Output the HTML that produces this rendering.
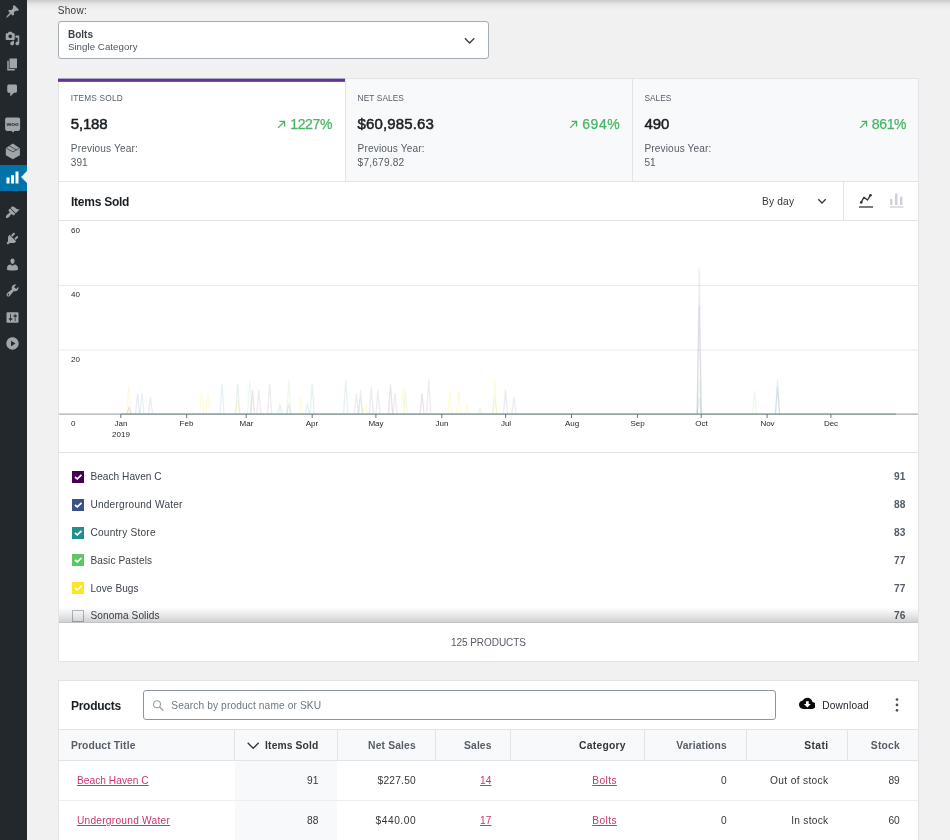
<!DOCTYPE html>
<html lang="en">
<head>
<meta charset="utf-8">
<title>Products Report</title>
<style>
*{box-sizing:border-box;margin:0;padding:0}
html,body{width:950px;height:840px;overflow:hidden}
body{background:#f1f1f1;font-family:"Liberation Sans",sans-serif;color:#23282d;position:relative;font-size:10px}
.abs{position:absolute}
#side{position:absolute;left:0;top:0;width:27px;height:840px;background:#23282d}
#side svg{will-change:transform}
#side .cur{position:absolute;left:0;top:164.700px;width:27px;height:26.300px;background:#0073aa}
#side .cur:after{content:"";position:absolute;right:0;top:6.600px;border:6.500px solid transparent;border-right:6px solid #f1f1f1;border-left:0}
#side svg{position:absolute;left:5.400px;width:15px;height:15px;fill:#a0a5aa}
#topshadow{position:absolute;left:27px;top:0;width:923px;height:10px;background:linear-gradient(#c9c9cb,#e6e6e7 40%,#f1f1f1)}
.t{position:absolute;white-space:nowrap;line-height:1}
#txt{position:absolute;left:0;top:0;width:950px;height:840px;will-change:transform}
.b{font-weight:bold}
.lk{text-decoration:underline;text-underline-offset:1px;text-decoration-thickness:.8px}
.card{position:absolute;background:#fff;border:1px solid #e2e4e7}
.cb{position:absolute;left:13px;width:12px;height:12px}
.cb svg{display:block}
</style>
</head>
<body>
<div id="side">
<div class="cur"></div>
<svg style="top:4px;fill:#a0a5aa" viewBox="0 0 20 20"><path fill-rule="evenodd" d="M10.44 3.02l1.82-1.82 6.36 6.35-1.83 1.82c-1.050-.68-2.480-.57-3.410.36l-.75.75c-.920.930-1.040 2.350-.350 3.410l-1.830 1.820-2.410-2.410-2.800 2.790c-.420.420-3.380 2.710-3.800 2.290s1.860-3.390 2.280-3.810l2.790-2.790L4.100 9.360l1.830-1.820c1.050.690 2.480.570 3.400-.360l.750-.750c.930-.920 1.050-2.350.360-3.410z"/></svg>
<svg style="top:30.5px;fill:#a0a5aa" viewBox="0 0 20 20"><path fill-rule="evenodd" d="M13 11V4c0-.55-.45-1-1-1h-1.670L9 1H5L3.670 3H2c-.55 0-1 .45-1 1v7c0 .55.45 1 1 1h10c.55 0 1-.45 1-1zM7 4.500c1.380 0 2.500 1.120 2.500 2.500S8.380 9.500 7 9.500 4.500 8.380 4.500 7 5.620 4.500 7 4.500zM14 6h5v10.500c0 1.380-1.120 2.500-2.500 2.500S14 17.880 14 16.500s1.120-2.500 2.500-2.500c.17 0 .34.020.5.050V9h-3V6zm-4 8.050V13h2v3.500c0 1.380-1.120 2.500-2.500 2.500S7 17.880 7 16.500 8.120 14 9.500 14c.17 0 .34.020.5.050z"/></svg>
<svg style="top:56.75px;fill:#a0a5aa" viewBox="0 0 20 20"><path fill-rule="evenodd" d="M6 15V2h10v13H6zm-1 1h8v2H3V5h2v11z"/></svg>
<svg style="top:82.85px;fill:#a0a5aa" viewBox="0 0 20 20"><path fill-rule="evenodd" d="M5 2h9c1.100 0 2 .9 2 2v7c0 1.100-.9 2-2 2h-2l-5 5v-5H5c-1.100 0-2-.9-2-2V4c0-1.100.9-2 2-2z"/></svg>
<svg style="top:0;left:0;width:27px;height:165px" viewBox="0 0 27 165"><path d="M6.900 117.400h11.400a1.800 1.800 0 0 1 1.800 1.800v9.900a1.800 1.800 0 0 1-1.800 1.800h-3.900l-1.300 1.900-1.300-1.900h-4.900a1.800 1.800 0 0 1-1.800-1.800v-9.900a1.800 1.800 0 0 1 1.800-1.800z"/><text x="12.700" y="125.600" text-anchor="middle" font-family="Liberation Sans, sans-serif" font-weight="bold" font-size="6.200" style="fill:#23282d">woo</text><path d="M12.800 143.400L19.900 148.300V155.300L12.800 159.300L5.800 155.300V148.300Z"/><path d="M6.500 148.300L12.800 151.800L19.300 148.300M9.300 145.900L16.300 149.800" fill="none" stroke="#23282d" stroke-width=".7"/></svg>
<svg style="top:170.1px;fill:#fff" viewBox="0 0 20 20"><path fill-rule="evenodd" d="M18 18V2h-4v16h4zm-6 0V7H8v11h4zm-6 0v-8H2v8h4z"/></svg>
<svg style="top:204.7px;fill:#a0a5aa" viewBox="0 0 20 20"><path fill-rule="evenodd" d="M14.480 11.060L7.410 3.990l1.500-1.500c.5-.56 2.300-.470 3.510.320 1.210.8 1.430 1.280 2.910 2.100 1.180.64 2.450 1.260 4.450.850zm-.710.710L6.700 4.700 4.930 6.470c-.390.390-.390 1.020 0 1.410l1.060 1.060c.390.390.390 1.030 0 1.420-.6.600-1.430 1.110-2.210 1.690-.350.260-.7.530-1.010.840C1.430 14.230.4 16.080 1.400 17.070c.990 1 2.840-.030 4.180-1.360.310-.310.580-.660.850-1.020.570-.780 1.080-1.610 1.690-2.210.390-.390 1.020-.390 1.410 0l1.060 1.060c.390.390 1.020.390 1.410 0z"/></svg>
<svg style="top:230.9px;fill:#a0a5aa" viewBox="0 0 20 20"><path fill-rule="evenodd" d="M13.110 4.360L9.870 7.600 8 5.730l3.240-3.240c.350-.340 1.050-.2 1.560.320.520.510.660 1.210.310 1.550zm-8 1.770l.910-1.120 9.010 9.010-1.190.840c-.710.710-2.630 1.160-3.820 1.160H6.140L4.900 17.260c-.590.590-1.540.590-2.120 0-.590-.580-.590-1.530 0-2.120L4 13.900V10c0-1.190.4-3.160 1.110-3.870zm7.260 3.970l3.240-3.240c.340-.350 1.040-.210 1.550.310.520.510.660 1.210.310 1.550l-3.240 3.250z"/></svg>
<svg style="top:257.2px;fill:#a0a5aa" viewBox="0 0 20 20"><path fill-rule="evenodd" d="M10 9.250c-2.270 0-2.730-3.440-2.730-3.440C7 4.020 7.820 2 9.970 2c2.160 0 2.980 2.020 2.710 3.810 0 0-.410 3.440-2.680 3.440zm0 2.570L12.720 10c2.390 0 4.520 2.330 4.520 4.530v2.490s-3.650 1.130-7.240 1.130c-3.650 0-7.240-1.130-7.240-1.130v-2.490c0-2.250 1.940-4.480 4.470-4.480z"/></svg>
<svg style="top:283.3px;fill:#a0a5aa" viewBox="0 0 20 20"><path fill-rule="evenodd" d="M16.680 9.770c-1.340 1.340-3.300 1.670-4.950.990l-5.410 6.520c-.990.990-2.590.990-3.580 0s-.99-2.590 0-3.570l6.520-5.420c-.680-1.650-.350-3.610.990-4.950 1.280-1.280 3.120-1.620 4.720-1.060l-2.890 2.890 2.820 2.820 2.860-2.870c.530 1.580.180 3.390-1.080 4.650zM3.810 16.210c.4.390 1.040.390 1.430 0 .4-.4.400-1.040 0-1.430-.390-.4-1.030-.4-1.430 0-.390.390-.390 1.030 0 1.430z"/></svg>
<svg style="top:309.8px;fill:#a0a5aa" viewBox="0 0 20 20"><path fill-rule="evenodd" d="M18 16V4c0-.55-.45-1-1-1H3c-.55 0-1 .45-1 1v12c0 .55.45 1 1 1h14c.55 0 1-.45 1-1zM8 11h1c.55 0 1 .45 1 1s-.45 1-1 1H8v1.500c0 .28-.22.500-.5.500s-.5-.22-.5-.5V13H6c-.55 0-1-.45-1-1s.45-1 1-1h1V5.500c0-.28.220-.5.500-.5s.5.220.5.500V11zm5-2h-1c-.55 0-1-.45-1-1s.45-1 1-1h1V5.500c0-.28.220-.5.500-.5s.5.220.5.500V7h1c.55 0 1 .45 1 1s-.45 1-1 1h-1v5.500c0 .28-.22.500-.5.500s-.5-.22-.5-.5V9z"/></svg>
<svg style="top:336.3px;fill:#a0a5aa" viewBox="0 0 20 20"><path fill-rule="evenodd" d="M10 1.800c-4.530 0-8.200 3.670-8.200 8.200s3.670 8.200 8.200 8.200 8.200-3.670 8.200-8.200S14.530 1.800 10 1.800zM8 13.800V6.200l5.900 3.800z"/></svg>
</div>

<div id="topshadow"></div>
<div class="abs" style="left:58px;top:21px;width:431px;height:38px;background:#fff;border:1px solid #a4adb6;border-radius:3px"></div>
<svg class="abs" style="left:463px;top:35px" width="14" height="11" viewBox="463 35 14 11"><path d="M464.900 38.300L469.600 42.900L474.300 38.300" fill="none" stroke="#3c4043" stroke-width="1.400"/></svg>
<div class="card" style="left:58px;top:78px;width:861px;height:104px;background:#f8f9fa"></div>
<div class="abs" style="left:59px;top:79px;width:286px;height:102px;background:#fff"></div>
<div class="abs" style="left:58px;top:78px;width:287px;height:1px;background:#aea2c7"></div>
<div class="abs" style="left:58px;top:79px;width:287px;height:2px;background:#5f3695"></div>
<div class="abs" style="left:58px;top:81px;width:287px;height:1px;background:#7355a3"></div>
<div class="abs" style="left:345px;top:79px;width:1px;height:102px;background:#e2e4e7"></div>
<div class="abs" style="left:632px;top:79px;width:1px;height:102px;background:#e2e4e7"></div>
<svg class="abs" style="left:276.3px;top:119px" width="10" height="11" viewBox="-1 -2 10 11"><path d="M1.100 6.900L7.300 0.700M2.600 0.400H7.600V5.400" fill="none" stroke="#45b764" stroke-width="1.250"/></svg>
<svg class="abs" style="left:567.8px;top:119px" width="10" height="11" viewBox="-1 -2 10 11"><path d="M1.100 6.900L7.300 0.700M2.600 0.400H7.600V5.400" fill="none" stroke="#45b764" stroke-width="1.250"/></svg>
<svg class="abs" style="left:857.9px;top:119px" width="10" height="11" viewBox="-1 -2 10 11"><path d="M1.100 6.900L7.300 0.700M2.600 0.400H7.600V5.400" fill="none" stroke="#45b764" stroke-width="1.250"/></svg>
<div class="card" style="left:58px;top:181px;width:861px;height:481px"></div>
<div class="abs" style="left:59px;top:220px;width:859px;height:1px;background:#e2e4e7"></div>
<div class="abs" style="left:843px;top:182px;width:1px;height:38px;background:#e2e4e7"></div>
<div class="abs" style="left:59px;top:452px;width:859px;height:1px;background:#e2e4e7"></div>
<svg class="abs" style="left:0;top:0;will-change:transform" width="950" height="460" viewBox="0 0 950 460">
<g fill="none" stroke-width="1.3" stroke-linejoin="round">
<path d="M59 285.5H918M59 350H918" stroke="#e8eaeb" stroke-width="1"/>
<path d="M126.6 414.5L128.7 387L130.8 414.5" stroke="#fde725" stroke-opacity="0.17"/><path d="M126.9 414.5L129.0 407L131.1 414.5" stroke="#440154" stroke-opacity="0.115"/><path d="M135.5 414.5L137.6 394L139.7 414.5" stroke="#3b528b" stroke-opacity="0.115"/><path d="M139.9 414.5L142.0 394L144.1 414.5" stroke="#21908d" stroke-opacity="0.115"/><path d="M148.4 414.5L150.5 397L152.6 414.5" stroke="#7a5195" stroke-opacity="0.115"/><path d="M199.6 414.5L201.7 391.5L203.8 414.5" stroke="#fde725" stroke-opacity="0.17"/><path d="M205.9 414.5L208.0 394L210.1 414.5" stroke="#fde725" stroke-opacity="0.17"/><path d="M219.9 414.5L222.0 384L224.1 414.5" stroke="#21908d" stroke-opacity="0.115"/><path d="M235.6 414.5L237.7 384L239.8 414.5" stroke="#21908d" stroke-opacity="0.115"/><path d="M235.6 414.5L237.7 400L239.8 414.5" stroke="#fde725" stroke-opacity="0.17"/><path d="M247.6 414.5L249.7 381L251.8 414.5" stroke="#5dc863" stroke-opacity="0.115"/><path d="M250.4 414.5L252.5 390.5L254.6 414.5" stroke="#440154" stroke-opacity="0.115"/><path d="M256.7 414.5L258.8 390.5L260.9 414.5" stroke="#7a5195" stroke-opacity="0.115"/><path d="M267.5 414.5L269.6 384L271.7 414.5" stroke="#7a5195" stroke-opacity="0.115"/><path d="M277.9 414.5L280.0 404.7L282.1 414.5" stroke="#21908d" stroke-opacity="0.115"/><path d="M286.7 414.5L288.8 381L290.9 414.5" stroke="#5dc863" stroke-opacity="0.115"/><path d="M286.7 414.5L288.8 404L290.9 414.5" stroke="#3b528b" stroke-opacity="0.115"/><path d="M298.7 414.5L300.8 397L302.9 414.5" stroke="#fde725" stroke-opacity="0.17"/><path d="M305.3 414.5L307.4 404L309.5 414.5" stroke="#21908d" stroke-opacity="0.115"/><path d="M310.1 414.5L312.2 384L314.3 414.5" stroke="#21908d" stroke-opacity="0.115"/><path d="M343.6 414.5L345.7 381L347.8 414.5" stroke="#21908d" stroke-opacity="0.115"/><path d="M354.3 414.5L356.4 393.7L358.5 414.5" stroke="#7a5195" stroke-opacity="0.115"/><path d="M358.4 414.5L360.5 390.5L362.6 414.5" stroke="#21908d" stroke-opacity="0.115"/><path d="M358.4 414.5L360.5 398L362.6 414.5" stroke="#5dc863" stroke-opacity="0.115"/><path d="M362.9 414.5L365.0 404.7L367.1 414.5" stroke="#fde725" stroke-opacity="0.17"/><path d="M369.2 414.5L371.3 387.4L373.4 414.5" stroke="#3b528b" stroke-opacity="0.115"/><path d="M375.8 414.5L377.9 390.5L380.0 414.5" stroke="#7a5195" stroke-opacity="0.115"/><path d="M388.4 414.5L390.5 384.8L392.6 414.5" stroke="#440154" stroke-opacity="0.115"/><path d="M392.9 414.5L395.0 393.7L397.1 414.5" stroke="#7a5195" stroke-opacity="0.115"/><path d="M400.9 414.5L403.0 387L405.1 414.5" stroke="#fde725" stroke-opacity="0.17"/><path d="M403.3 414.5L405.4 390.5L407.5 414.5" stroke="#5dc863" stroke-opacity="0.115"/><path d="M419.9 414.5L422.0 393.7L424.1 414.5" stroke="#440154" stroke-opacity="0.115"/><path d="M426.6 414.5L428.7 380.4L430.8 414.5" stroke="#7a5195" stroke-opacity="0.115"/><path d="M447.9 414.5L450.0 390.5L452.1 414.5" stroke="#fde725" stroke-opacity="0.17"/><path d="M456.6 414.5L458.7 390.5L460.8 414.5" stroke="#fde725" stroke-opacity="0.17"/><path d="M464.9 414.5L467.0 406L469.1 414.5" stroke="#fde725" stroke-opacity="0.17"/><path d="M477.9 414.5L480.0 408L482.1 414.5" stroke="#5dc863" stroke-opacity="0.115"/><path d="M492.6 414.5L494.7 380L496.8 414.5" stroke="#fde725" stroke-opacity="0.17"/><path d="M492.6 414.5L494.7 397L496.8 414.5" stroke="#5dc863" stroke-opacity="0.115"/><path d="M503.4 414.5L505.5 390.5L507.6 414.5" stroke="#3b528b" stroke-opacity="0.115"/><path d="M511.9 414.5L514.0 397L516.1 414.5" stroke="#7a5195" stroke-opacity="0.115"/><path d="M697.1 414.5L699.2 269L701.3 414.5" stroke="#7a5195" stroke-opacity="0.115"/><path d="M697.1 414.5L699.2 306L701.3 414.5" stroke="#3b528b" stroke-opacity="0.115"/><path d="M697.1 414.5L699.2 379L701.3 414.5" stroke="#5dc863" stroke-opacity="0.115"/><path d="M697.1 414.5L699.2 398L701.3 414.5" stroke="#21908d" stroke-opacity="0.115"/><path d="M752.6 414.5L754.7 391L756.8 414.5" stroke="#5dc863" stroke-opacity="0.115"/><path d="M775.4 414.5L777.5 380.5L779.6 414.5" stroke="#21908d" stroke-opacity="0.115"/><path d="M775.4 414.5L777.5 387L779.6 414.5" stroke="#3b528b" stroke-opacity="0.115"/>
<path d="M59 414.100H918" stroke="#a9afb3" stroke-width="1.300"/>
<path d="M120.800 414.100H896" stroke="#8b9c9c" stroke-width="1.300"/>
<path d="M120.8 414v4M186.7 414v4M246.2 414v4M312.2 414v4M375.9 414v4M441.8 414v4M505.6 414v4M571.5 414v4M637.4 414v4M701.2 414v4M767.1 414v4M830.9 414v4" stroke="#6b7679" stroke-width="1"/>
</g>
<g font-family="Liberation Sans, sans-serif" font-size="8" fill="#23282d">
<text x="71" y="233">60</text><text x="71" y="297">40</text><text x="71" y="362">20</text><text x="71" y="426">0</text>
<g text-anchor="middle">
<text x="121" y="426">Jan</text><text x="121" y="436.700">2019</text>
<text x="186.5" y="426">Feb</text><text x="246.5" y="426">Mar</text><text x="312" y="426">Apr</text>
<text x="376" y="426">May</text><text x="442" y="426">Jun</text><text x="506" y="426">Jul</text>
<text x="572" y="426">Aug</text><text x="637.5" y="426">Sep</text><text x="701.5" y="426">Oct</text>
<text x="767.5" y="426">Nov</text><text x="831" y="426">Dec</text>
</g></g>
</svg>

<svg class="abs" style="left:810px;top:185px" width="100" height="30" viewBox="810 185 100 30">
<path d="M818.300 199.300L822 203L825.700 199.300" fill="none" stroke="#32373c" stroke-width="1.300"/>
<path d="M859 207H873" stroke="#32373c" stroke-width="1.300"/>
<path d="M861.200 202.400L863.900 197.200L867.500 200L870.500 195.200" fill="none" stroke="#32373c" stroke-width="1.400" stroke-linejoin="round"/>
<circle cx="861.200" cy="202.400" r="1.300" fill="#32373c"/><circle cx="870.500" cy="195.200" r="1.300" fill="#32373c"/>
<path d="M889.800 207H903.500" stroke="#ccd0d4" stroke-width="1.300"/>
<path d="M890.200 199h2.100v6h-2.100zM895 193.600h2.400V205H895zM900 196.700h2.400V205H900z" fill="#ccd0d4"/>
</svg>

<div class="abs" style="left:59px;top:453px;width:859px;height:170px;overflow:hidden">
<div class="cb" style="top:18.00px;background:#440154"><svg width="12" height="12" viewBox="0 0 12 12"><path d="M2.900 6L5.300 7.900L9.500 3.900" fill="none" stroke="#fff" stroke-width="1.700"/></svg></div>
<div class="cb" style="top:45.75px;background:#3b528b"><svg width="12" height="12" viewBox="0 0 12 12"><path d="M2.900 6L5.300 7.900L9.500 3.900" fill="none" stroke="#fff" stroke-width="1.700"/></svg></div>
<div class="cb" style="top:73.50px;background:#21908d"><svg width="12" height="12" viewBox="0 0 12 12"><path d="M2.900 6L5.300 7.900L9.500 3.900" fill="none" stroke="#fff" stroke-width="1.700"/></svg></div>
<div class="cb" style="top:101.25px;background:#5dc863"><svg width="12" height="12" viewBox="0 0 12 12"><path d="M2.900 6L5.300 7.900L9.500 3.900" fill="none" stroke="#fff" stroke-width="1.700"/></svg></div>
<div class="cb" style="top:129.00px;background:#fde725"><svg width="12" height="12" viewBox="0 0 12 12"><path d="M2.900 6L5.300 7.900L9.500 3.900" fill="none" stroke="#fff" stroke-width="1.700"/></svg></div>
<div class="cb" style="top:156.75px;background:#fff;border:1px solid #b5bcc2"></div>
</div>
<div class="card" style="left:58px;top:680px;width:861px;height:200px"></div>
<div class="abs" style="left:143px;top:690px;width:633px;height:30px;background:#fff;border:1px solid #8d96a0;border-radius:3px"></div>
<svg class="abs" style="left:151px;top:698px" width="14" height="14" viewBox="151 698 14 14"><circle cx="157" cy="704.300" r="3.500" fill="none" stroke="#98a2ac" stroke-width="1.100"/><path d="M159.600 707L163.500 710.800" stroke="#98a2ac" stroke-width="1.200"/></svg>
<svg class="abs" style="left:798.600px;top:695.400px" width="16.700" height="16.700" viewBox="0 0 24 24"><path d="M19.350 10.040C18.670 6.590 15.640 4 12 4 9.110 4 6.600 5.640 5.350 8.040 2.340 8.360 0 10.910 0 14c0 3.310 2.690 6 6 6h13c2.760 0 5-2.240 5-5 0-2.640-2.050-4.780-4.650-4.960zM17 13l-5 5-5-5h3V9h4v4h3z" fill="#0a0a0a"/></svg>
<svg class="abs" style="left:893.800px;top:696px" width="6" height="18" viewBox="0 0 6 18"><circle cx="3" cy="3.500" r="1.350" fill="#4a5057"/><circle cx="3" cy="8.900" r="1.350" fill="#4a5057"/><circle cx="3" cy="14.300" r="1.350" fill="#4a5057"/></svg>
<div class="abs" style="left:59px;top:729px;width:859px;height:32px;background:#f8f9fa;border-top:1px solid #e2e4e7;border-bottom:1px solid #e2e4e7"></div>
<div class="abs" style="left:235px;top:761px;width:102px;height:79px;background:#f8f9fa"></div>
<div class="abs" style="left:59px;top:800px;width:859px;height:1px;background:#eceef0"></div>
<div class="abs" style="left:234px;top:730px;width:1px;height:30px;background:#e2e4e7"></div>
<div class="abs" style="left:337px;top:730px;width:1px;height:30px;background:#e2e4e7"></div>
<div class="abs" style="left:434.5px;top:730px;width:1px;height:30px;background:#e2e4e7"></div>
<div class="abs" style="left:510px;top:730px;width:1px;height:30px;background:#e2e4e7"></div>
<div class="abs" style="left:644px;top:730px;width:1px;height:30px;background:#e2e4e7"></div>
<div class="abs" style="left:745.5px;top:730px;width:1px;height:30px;background:#e2e4e7"></div>
<div class="abs" style="left:846.5px;top:730px;width:1px;height:30px;background:#e2e4e7"></div>
<svg class="abs" style="left:246px;top:740px" width="14" height="11" viewBox="246 740 14 11"><path d="M247.700 742.800L253.200 748.300L258.700 742.800" fill="none" stroke="#32373c" stroke-width="1.300"/></svg>
<div id="txt">
<div class="t" id="t0" style="left:57.8px;top:6.00px;font-size:10px;color:#32373c;letter-spacing:0.276px">Show:</div>
<div class="t b" id="t1" style="left:68.0px;top:30.01px;font-size:10px;color:#3c434a">Bolts</div>
<div class="t" id="t2" style="left:67.9px;top:42.00px;font-size:9.7px;color:#50575e;letter-spacing:0.047px">Single Category</div>
<div class="t" id="t3" style="left:70.8px;top:94.01px;font-size:8.3px;color:#555d66;letter-spacing:0.182px">ITEMS SOLD</div>
<div class="t" id="t4" style="left:70.8px;top:116.01px;font-size:15px;color:#191e23;-webkit-text-stroke:.5px #191e23;letter-spacing:-0.187px">5,188</div>
<div class="t" id="t5" style="left:70.8px;top:144.00px;font-size:10.1px;color:#555d66;letter-spacing:0.147px">Previous Year:</div>
<div class="t" id="t6" style="left:70.8px;top:158.00px;font-size:10.1px;color:#555d66">391</div>
<div class="t" id="t7" style="left:357.6px;top:94.01px;font-size:8.3px;color:#555d66;letter-spacing:0.100px">NET SALES</div>
<div class="t" id="t8" style="left:357.6px;top:116.01px;font-size:15px;color:#191e23;-webkit-text-stroke:.5px #191e23;letter-spacing:0.136px">$60,985.63</div>
<div class="t" id="t9" style="left:357.6px;top:144.00px;font-size:10.1px;color:#555d66;letter-spacing:0.147px">Previous Year:</div>
<div class="t" id="t10" style="left:357.6px;top:158.00px;font-size:10.1px;color:#555d66;letter-spacing:0.212px">$7,679.82</div>
<div class="t" id="t11" style="left:644.4px;top:94.01px;font-size:8.3px;color:#555d66;letter-spacing:0.059px">SALES</div>
<div class="t" id="t12" style="left:644.4px;top:116.01px;font-size:15px;color:#191e23;-webkit-text-stroke:.5px #191e23">490</div>
<div class="t" id="t13" style="left:644.4px;top:144.00px;font-size:10.1px;color:#555d66;letter-spacing:0.147px">Previous Year:</div>
<div class="t" id="t14" style="left:644.4px;top:158.00px;font-size:10.1px;color:#555d66">51</div>
<div class="t" id="t15" style="left:290.2px;top:117.00px;font-size:14px;color:#45b764;-webkit-text-stroke:.25px #45b764;letter-spacing:-0.348px">1227%</div>
<div class="t" id="t16" style="left:582.2px;top:117.00px;font-size:14px;color:#45b764;-webkit-text-stroke:.25px #45b764;letter-spacing:0.600px">694%</div>
<div class="t" id="t17" style="left:871.8px;top:117.00px;font-size:14px;color:#45b764;-webkit-text-stroke:.25px #45b764;letter-spacing:-0.371px">861%</div>
<div class="t b" id="t18" style="left:71.0px;top:196.01px;font-size:12px;color:#191e23;letter-spacing:-0.254px">Items Sold</div>
<div class="t" id="t19" style="left:762.1px;top:197.00px;font-size:10.2px;color:#32373c;letter-spacing:0.149px">By day</div>
<div class="t" id="t20" style="left:451.1px;top:638.00px;font-size:10px;color:#555d66;letter-spacing:-0.071px">125 PRODUCTS</div>
<div class="t" id="t21" style="left:90.4px;top:472.01px;font-size:10.1px;color:#3c434a;letter-spacing:0.041px">Beach Haven C</div>
<div class="t b" id="t22" style="left:894.1px;top:472.01px;font-size:10.2px;color:#555d66">91</div>
<div class="t" id="t23" style="left:90.4px;top:500.01px;font-size:10.1px;color:#3c434a;letter-spacing:0.239px">Underground Water</div>
<div class="t b" id="t24" style="left:894.1px;top:500.01px;font-size:10.2px;color:#555d66">88</div>
<div class="t" id="t25" style="left:90.4px;top:528.01px;font-size:10.1px;color:#3c434a;letter-spacing:0.243px">Country Store</div>
<div class="t b" id="t26" style="left:894.1px;top:528.01px;font-size:10.2px;color:#555d66">83</div>
<div class="t" id="t27" style="left:90.4px;top:556.01px;font-size:10.1px;color:#3c434a;letter-spacing:0.092px">Basic Pastels</div>
<div class="t b" id="t28" style="left:894.1px;top:556.01px;font-size:10.2px;color:#555d66">77</div>
<div class="t" id="t29" style="left:90.4px;top:584.01px;font-size:10.1px;color:#3c434a;letter-spacing:0.062px">Love Bugs</div>
<div class="t b" id="t30" style="left:894.1px;top:584.01px;font-size:10.2px;color:#555d66">77</div>
<div class="t" id="t31" style="left:90.4px;top:611.01px;font-size:10.1px;color:#3c434a;letter-spacing:0.108px">Sonoma Solids</div>
<div class="t b" id="t32" style="left:894.1px;top:611.01px;font-size:10.2px;color:#555d66">76</div>
<div class="t b" id="t33" style="left:70.9px;top:700.00px;font-size:12px;color:#191e23;letter-spacing:-0.245px">Products</div>
<div class="t" id="t34" style="left:171.3px;top:701.01px;font-size:10.2px;color:#6c7781;letter-spacing:0.112px">Search by product name or SKU</div>
<div class="t" id="t35" style="left:822.2px;top:701.01px;font-size:10.2px;color:#191e23;letter-spacing:0.184px">Download</div>
<div class="t b" id="t36" style="left:70.9px;top:741.01px;font-size:10.3px;color:#555d66;letter-spacing:0.146px">Product Title</div>
<div class="t b" id="t37" style="left:265.1px;top:741.01px;font-size:10.3px;color:#32373c;letter-spacing:0.125px">Items Sold</div>
<div class="t b" id="t38" style="left:368.1px;top:741.01px;font-size:10.3px;color:#555d66;letter-spacing:0.153px">Net Sales</div>
<div class="t b" id="t39" style="left:464.1px;top:741.01px;font-size:10.3px;color:#555d66;letter-spacing:0.095px">Sales</div>
<div class="t b" id="t40" style="left:579.1px;top:741.01px;font-size:10.3px;color:#32373c;letter-spacing:0.266px">Category</div>
<div class="t b" id="t41" style="left:676.3px;top:741.01px;font-size:10.3px;color:#555d66;letter-spacing:0.131px">Variations</div>
<div class="t b" id="t42" style="left:804.2px;top:741.01px;font-size:10.3px;color:#32373c;letter-spacing:0.393px">Stati</div>
<div class="t b" id="t43" style="left:870.8px;top:741.01px;font-size:10.3px;color:#555d66;letter-spacing:0.213px">Stock</div>
<div class="t lk" id="t44" style="left:76.9px;top:776.00px;font-size:10.2px;color:#c9356e;letter-spacing:0.037px">Beach Haven C</div>
<div class="t" id="t45" style="left:307.0px;top:776.00px;font-size:10.2px;color:#32373c">91</div>
<div class="t" id="t46" style="left:377.6px;top:776.00px;font-size:10.2px;color:#32373c;letter-spacing:0.212px">$227.50</div>
<div class="t lk" id="t47" style="left:480.1px;top:776.00px;font-size:10.2px;color:#c9356e">14</div>
<div class="t lk" id="t48" style="left:592.3px;top:776.00px;font-size:10.2px;color:#c9356e;letter-spacing:0.386px">Bolts</div>
<div class="t" id="t49" style="left:721.0px;top:776.00px;font-size:10.2px;color:#32373c">0</div>
<div class="t" id="t50" style="left:770.1px;top:776.00px;font-size:10.2px;color:#32373c;letter-spacing:0.331px">Out of stock</div>
<div class="t" id="t51" style="left:888.4px;top:776.00px;font-size:10.2px;color:#32373c">89</div>
<div class="t lk" id="t52" style="left:76.9px;top:816.00px;font-size:10.2px;color:#c9356e;letter-spacing:0.244px">Underground Water</div>
<div class="t" id="t53" style="left:307.0px;top:816.00px;font-size:10.2px;color:#32373c">88</div>
<div class="t" id="t54" style="left:375.4px;top:816.00px;font-size:10.2px;color:#32373c;letter-spacing:0.579px">$440.00</div>
<div class="t lk" id="t55" style="left:480.1px;top:816.00px;font-size:10.2px;color:#c9356e">17</div>
<div class="t lk" id="t56" style="left:592.3px;top:816.00px;font-size:10.2px;color:#c9356e;letter-spacing:0.386px">Bolts</div>
<div class="t" id="t57" style="left:721.0px;top:816.00px;font-size:10.2px;color:#32373c">0</div>
<div class="t" id="t58" style="left:791.3px;top:816.00px;font-size:10.2px;color:#32373c;letter-spacing:0.242px">In stock</div>
<div class="t" id="t59" style="left:888.4px;top:816.00px;font-size:10.2px;color:#32373c">60</div>
</div>
<div class="abs" style="left:59px;top:607px;width:859px;height:15px;background:linear-gradient(rgba(0,0,0,0),rgba(0,0,0,.07) 45%,rgba(0,0,0,.18))"></div>
<div class="abs" style="left:59px;top:622px;width:859px;height:1px;background:#c1c3c6"></div>
</body>
</html>
